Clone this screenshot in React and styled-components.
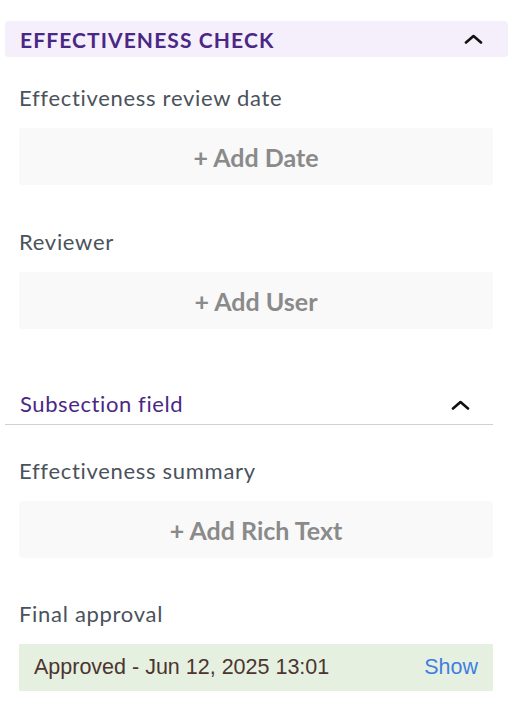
import React from 'react';
import styled, { createGlobalStyle } from 'styled-components';

const GlobalStyle = createGlobalStyle`
  body {
    margin: 0;
    background: #fff;
    font-family: Lato, 'Noto Sans', sans-serif;
  }
`;

const Page = styled.div`
  width: 503px;
  padding: 21px 0 0 5px;
`;

const SectionHeader = styled.div`
  height: 36px;
  display: flex;
  align-items: center;
  justify-content: space-between;
  padding: 0 25px 0 15px;
  background: #f4effb;
  border-radius: 4px;
`;

const SectionTitle = styled.h2`
  margin: 0;
  font-size: 21px;
  font-weight: 700;
  letter-spacing: 1.1px;
  color: #4b2785;
`;

const Content = styled.div`
  padding-right: 15px;
`;

const Field = styled.div`
  padding-left: 14px;
  padding-top: ${(p) => p.$top || 0}px;
`;

const Label = styled.div`
  font-size: 22px;
  line-height: 26px;
  color: #4a525c;
  letter-spacing: 0.7px;
  margin-bottom: 17px;
`;

const AddBox = styled.div`
  height: 57px;
  display: flex;
  align-items: center;
  justify-content: center;
  background: #f9f9f9;
  border-radius: 3px;
  font-size: 25px;
  font-weight: 700;
  color: #8a8a8a;
`;

const Subsection = styled.div`
  margin-top: 62px;
  display: flex;
  align-items: flex-start;
  justify-content: space-between;
  padding: 0 23px 7px 15px;
  border-bottom: 1px solid #cdd1da;
`;

const SubTitle = styled.div`
  font-size: 22px;
  line-height: 26px;
  color: #4b2785;
  letter-spacing: 0.6px;
`;

const Approval = styled.div`
  height: 47px;
  display: flex;
  align-items: center;
  justify-content: space-between;
  padding: 0 15px;
  background: #e6f0e0;
  font-family: 'Liberation Sans', Arial, sans-serif;
  font-size: 21.5px;
`;

const ApprovalText = styled.span`
  color: #4b3530;
`;

const ShowLink = styled.a`
  color: #3f7fe0;
  cursor: pointer;
`;

const Chevron = ({ top = 0 }) => (
  <svg width="19" height="10" viewBox="0 0 19 10" style={{ marginTop: top }}>
    <polyline
      points="2,8.5 9.5,2 17,8.5"
      fill="none"
      stroke="#111"
      strokeWidth="2.6"
      strokeLinecap="round"
      strokeLinejoin="round"
    />
  </svg>
);

export default function App() {
  return (
    <>
      <GlobalStyle />
      <Page>
        <SectionHeader>
          <SectionTitle>EFFECTIVENESS CHECK</SectionTitle>
          <Chevron />
        </SectionHeader>
        <Content>
          <Field $top={28}>
            <Label>Effectiveness review date</Label>
            <AddBox>+ Add Date</AddBox>
          </Field>
          <Field $top={44}>
            <Label>Reviewer</Label>
            <AddBox>+ Add User</AddBox>
          </Field>
          <Subsection>
            <SubTitle>Subsection field</SubTitle>
            <Chevron top={9} />
          </Subsection>
          <Field $top={33}>
            <Label>Effectiveness summary</Label>
            <AddBox>+ Add Rich Text</AddBox>
          </Field>
          <Field $top={43}>
            <Label>Final approval</Label>
            <Approval>
              <ApprovalText>Approved - Jun 12, 2025 13:01</ApprovalText>
              <ShowLink>Show</ShowLink>
            </Approval>
          </Field>
        </Content>
      </Page>
    </>
  );
}
